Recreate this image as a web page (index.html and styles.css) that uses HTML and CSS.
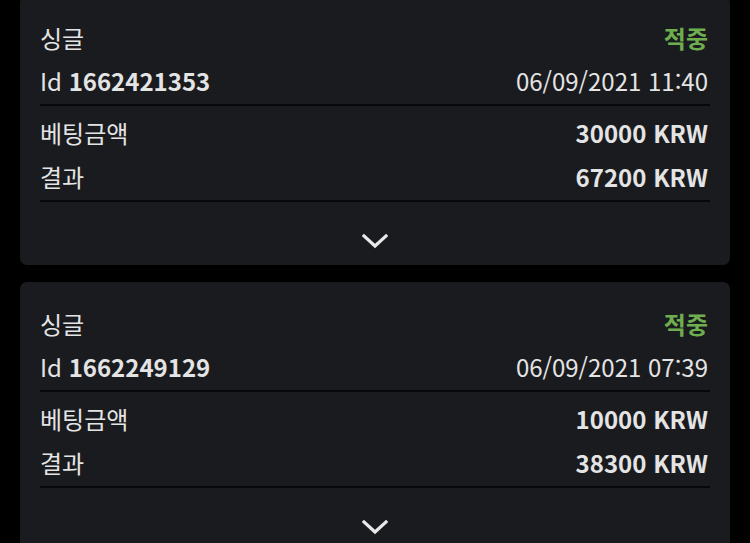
FILE: index.html
```html
<!DOCTYPE html>
<html lang="ko">
<head>
  <meta charset="UTF-8" />
  <meta name="viewport" content="width=device-width, initial-scale=1.0"/>
  <title>베팅 내역</title>
  <link rel="stylesheet" href="styles.css">
</head>
<body>

  <div class="bet-list">

    <div class="bet-card">
      <div class="bet-head">
        <div class="row">
          <span>싱글</span>
          <span class="status">적중</span>
        </div>
        <div class="row">
          <span>Id <strong>1662421353</strong></span>
          <span>06/09/2021 11:40</span>
        </div>
      </div>
      <div class="bet-body">
        <div class="row">
          <span>베팅금액</span>
          <strong>30000 KRW</strong>
        </div>
        <div class="row">
          <span>결과</span>
          <strong>67200 KRW</strong>
        </div>
      </div>
      <div class="bet-toggle">
        <svg width="26" height="16" viewBox="0 0 26 16"><path d="M2 3 L13 13 L24 3" fill="none" stroke="#e8e8e8" stroke-width="3.2" stroke-linecap="square"/></svg>
      </div>
    </div>

    <div class="bet-card">
      <div class="bet-head">
        <div class="row">
          <span>싱글</span>
          <span class="status">적중</span>
        </div>
        <div class="row">
          <span>Id <strong>1662249129</strong></span>
          <span>06/09/2021 07:39</span>
        </div>
      </div>
      <div class="bet-body">
        <div class="row">
          <span>베팅금액</span>
          <strong>10000 KRW</strong>
        </div>
        <div class="row">
          <span>결과</span>
          <strong>38300 KRW</strong>
        </div>
      </div>
      <div class="bet-toggle">
        <svg width="26" height="16" viewBox="0 0 26 16"><path d="M2 3 L13 13 L24 3" fill="none" stroke="#e8e8e8" stroke-width="3.2" stroke-linecap="square"/></svg>
      </div>
    </div>

  </div>

</body>
</html>
```

FILE: styles.css
```css
* {
  margin: 0;
  padding: 0;
  box-sizing: border-box;
}

body {
  font-family: 'Noto Sans CJK KR', 'Noto Sans', sans-serif;
  background: #000;
  color: #e4e4e4;
  font-size: 24px;
  overflow: hidden;
}

.bet-list {
  display: flex;
  flex-direction: column;
  gap: 17px;
  padding: 0 20px;
  margin-top: -4px;
}

.bet-card {
  background: #1a1b1f;
  border-radius: 7px;
  padding: 0 20px;
}

.row {
  display: flex;
  justify-content: space-between;
  align-items: center;
  padding: 0 2px 4px 0;
}

.bet-head {
  padding-top: 22px;
  border-bottom: 2px solid #08080a;
}

.bet-head .row {
  height: 43px;
}

.status {
  color: #6fae4f;
  font-weight: 700;
}

.bet-body {
  padding-top: 6px;
  border-bottom: 2px solid #08080a;
}

.bet-body .row {
  height: 44px;
}

.bet-toggle {
  height: 63px;
  display: flex;
  justify-content: center;
  padding-top: 31px;
}
```
